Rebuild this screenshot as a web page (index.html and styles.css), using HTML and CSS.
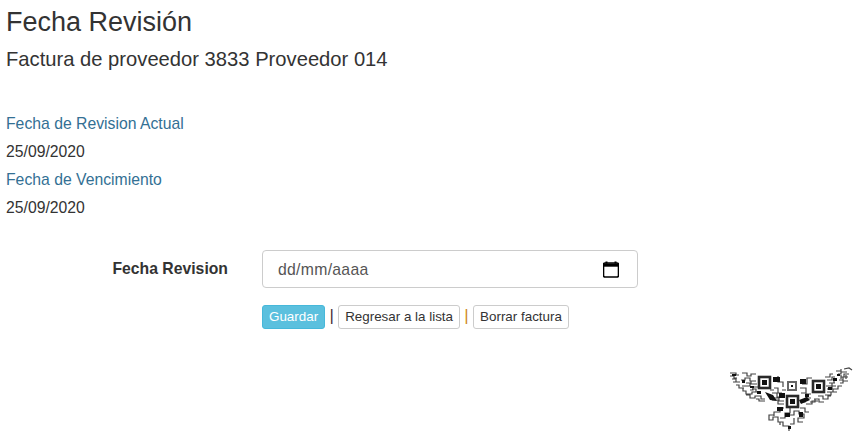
FILE: index.html
```html
<!DOCTYPE html>
<html lang="es">
<head>
    <meta charset="UTF-8">
    <title>Fecha Revisión</title>
    <link rel="stylesheet" href="styles.css">
</head>
<body>
    <h2 class="title">Fecha Revisión</h2>
    <h4 class="subtitle">Factura de proveedor 3833 Proveedor 014</h4>

    <dl class="details">
        <dt>Fecha de Revision Actual</dt>
        <dd>25/09/2020</dd>
        <dt>Fecha de Vencimiento</dt>
        <dd>25/09/2020</dd>
    </dl>

    <form class="form-row">
        <label class="form-label">Fecha Revision</label>
        <div class="form-field">
            <div class="date-input">
                <span>dd/mm/aaaa</span>
                <svg class="cal-icon" viewBox="0 0 16 16" width="16" height="17">
                    <path d="M3.5 0v2M12.5 0v2" stroke="#000" stroke-width="2" fill="none"/>
                    <path d="M2 1.5h12a1.5 1.5 0 0 1 1.5 1.5v11a1.5 1.5 0 0 1-1.5 1.5H2A1.5 1.5 0 0 1 .5 14V3A1.5 1.5 0 0 1 2 1.5z" fill="none" stroke="#000" stroke-width="1.6"/>
                    <rect x="1" y="2" width="14" height="3.2" fill="#000"/>
                </svg>
            </div>
            <div class="actions">
                <a class="btn btn-info">Guardar</a>
                <span class="sep">|</span>
                <a class="btn">Regresar a la lista</a>
                <span class="sep sep-orange">|</span>
                <a class="btn">Borrar factura</a>
            </div>
        </div>
    </form>

    <div class="footer">
        <svg class="logo" viewBox="0 0 126 66" width="126" height="66">
            <g fill="none" stroke="#444" stroke-width="1.2">
                <path d="M2 7h6v2h3M14 7h5v3h4v-2h5M2 10h4v2h3M13 14h4v-2h5v3h6M4 13h4v3h4M18 17h5v-2M5 16h4M14 20h8v-2h7M8 19h3v3h5M22 24h3v-3h5M11 22h4v3h3M24 23h4v3h3M15 25h3v3h6v-2h6M18 29h4v3h5v-2h6v3h4M28 33h3v2h6"/>
                <path d="M46 22h4v5h4M44 27h5v4h5M42 24h4M46 32h5v3h5M50 10v6h5v5M54 24h4M44 34h6v4h6"/>
                <path d="M97 11h5V8h3M108 5h5V3M99 14h5v-3h3M110 8h3V6h6M101 17h5v-3h3M113 11h3V8h5M98 20h6v-3h3M111 14h4v-3h5M99 23h5v-3h4M112 17h3v-2h5M99 26h6v-3h5v-3h4M97 29h6v-3h6M90 30h5v3h5v-3h3M86 33h5v3h5M82 36h5v-3M116 3l5-1 3 2M113 13v-4M118 13v-4"/>
                <path d="M72 22h6v6h5M74 18h5v-6h5M73 27h5v5h5M72 36h5v-4M78 38h6v-3h6"/>
                <path d="M56 42h-4v4h-6v3h-5v5h4v-3h5v5h5v4h6v5M62 42v5h-5v5h-5M60 49h6v-4h5v3h5v4h-6v4h5M52 56v3M46 47v3M72 42h5v4h4M66 52v6h-4"/>
            </g>
            <g fill="#111">
                <rect x="4" y="8" width="4" height="2"/>
                <rect x="14" y="14" width="3" height="3"/>
                <rect x="22" y="20" width="4" height="2"/>
                <rect x="29" y="25" width="4" height="3"/>
                <rect x="45" y="11" width="7" height="5"/>
                <path d="M37 26l8 3 4 6-7-1z"/>
                <rect x="51" y="27" width="6" height="5"/>
                <rect x="72" y="13" width="6" height="5"/>
                <rect x="77" y="28" width="4" height="3"/>
                <path d="M71 34l8-3 3 3-9 4z"/>
                <rect x="49" y="41" width="6" height="4"/>
                <rect x="57" y="47" width="5" height="4"/>
                <rect x="71" y="46" width="4" height="5"/>
                <rect x="105" y="12" width="4" height="3"/>
                <rect x="100" y="21" width="4" height="3"/>
                <rect x="109" y="8" width="3" height="2"/>
                <rect x="60" y="60" width="3" height="3"/>
            </g>
            <g fill="none" stroke="#2a2a2a">
                <rect x="31" y="11" width="11" height="11" stroke-width="2.6"/>
                <rect x="85" y="15" width="11" height="11" stroke-width="2.6"/>
                <rect x="59" y="30" width="11" height="11" stroke-width="2.6"/>
                <rect x="60" y="16" width="8" height="8" stroke-width="2" stroke="#666"/>
            </g>
            <g fill="#111">
                <rect x="34" y="14" width="5" height="5"/>
                <rect x="88" y="18" width="5" height="5"/>
                <rect x="62" y="33" width="5" height="5"/>
                <rect x="63" y="19" width="2" height="2"/>
            </g>
        </svg>
    </div>
</body>
</html>
```

FILE: styles.css
```css
* {
    box-sizing: border-box;
}
html, body {
    height: 100%;
}
body {
    margin: 0;
    padding: 0 6px;
    font-family: "Liberation Sans", Arial, sans-serif;
    font-size: 15.75px;
    line-height: 28px;
    color: #333;
    background: #fff;
    overflow: hidden;
}
.title {
    margin: 0;
    padding-top: 6px;
    font-size: 27px;
    font-weight: 400;
    line-height: 33px;
}
.subtitle {
    margin: 0;
    padding-top: 6px;
    font-size: 20.2px;
    font-weight: 400;
    line-height: 28px;
}
.details {
    margin: 37px 0 0;
}
.details dt {
    font-weight: 400;
    color: #337094;
}
.details dd {
    margin: 0;
}
.form-row {
    display: flex;
    margin-top: 28px;
}
.form-label {
    width: 222px;
    padding-top: 5px;
    text-align: right;
    font-weight: 700;
}
.form-field {
    width: 376px;
    margin-left: 34px;
}
.date-input {
    display: flex;
    align-items: center;
    justify-content: space-between;
    height: 38px;
    padding: 1px 18px 0 15px;
    border: 1px solid #ccc;
    border-radius: 4px;
    color: #555;
    letter-spacing: 0.3px;
}
.cal-icon {
    display: block;
    margin-top: -1px;
}
.actions {
    display: flex;
    align-items: center;
    margin-top: 17px;
    font-size: 13.4px;
    line-height: 20px;
}
.btn {
    display: block;
    height: 24px;
    padding: 1px 6px;
    border: 1px solid #ccc;
    border-radius: 3px;
    color: #333;
    white-space: nowrap;
}
.btn-info {
    background-color: #5bc0de;
    border-color: #46b8da;
    color: #fff;
}
.sep {
    width: 13px;
    margin-top: -3px;
    text-align: center;
    font-size: 17px;
    color: #4a2c3a;
}
.sep-orange {
    color: #d08a24;
}
.footer {
    display: flex;
    justify-content: flex-end;
    margin-top: 37px;
    padding-right: 6px;
}
.logo {
    display: block;
    filter: blur(0.45px);
}
```
